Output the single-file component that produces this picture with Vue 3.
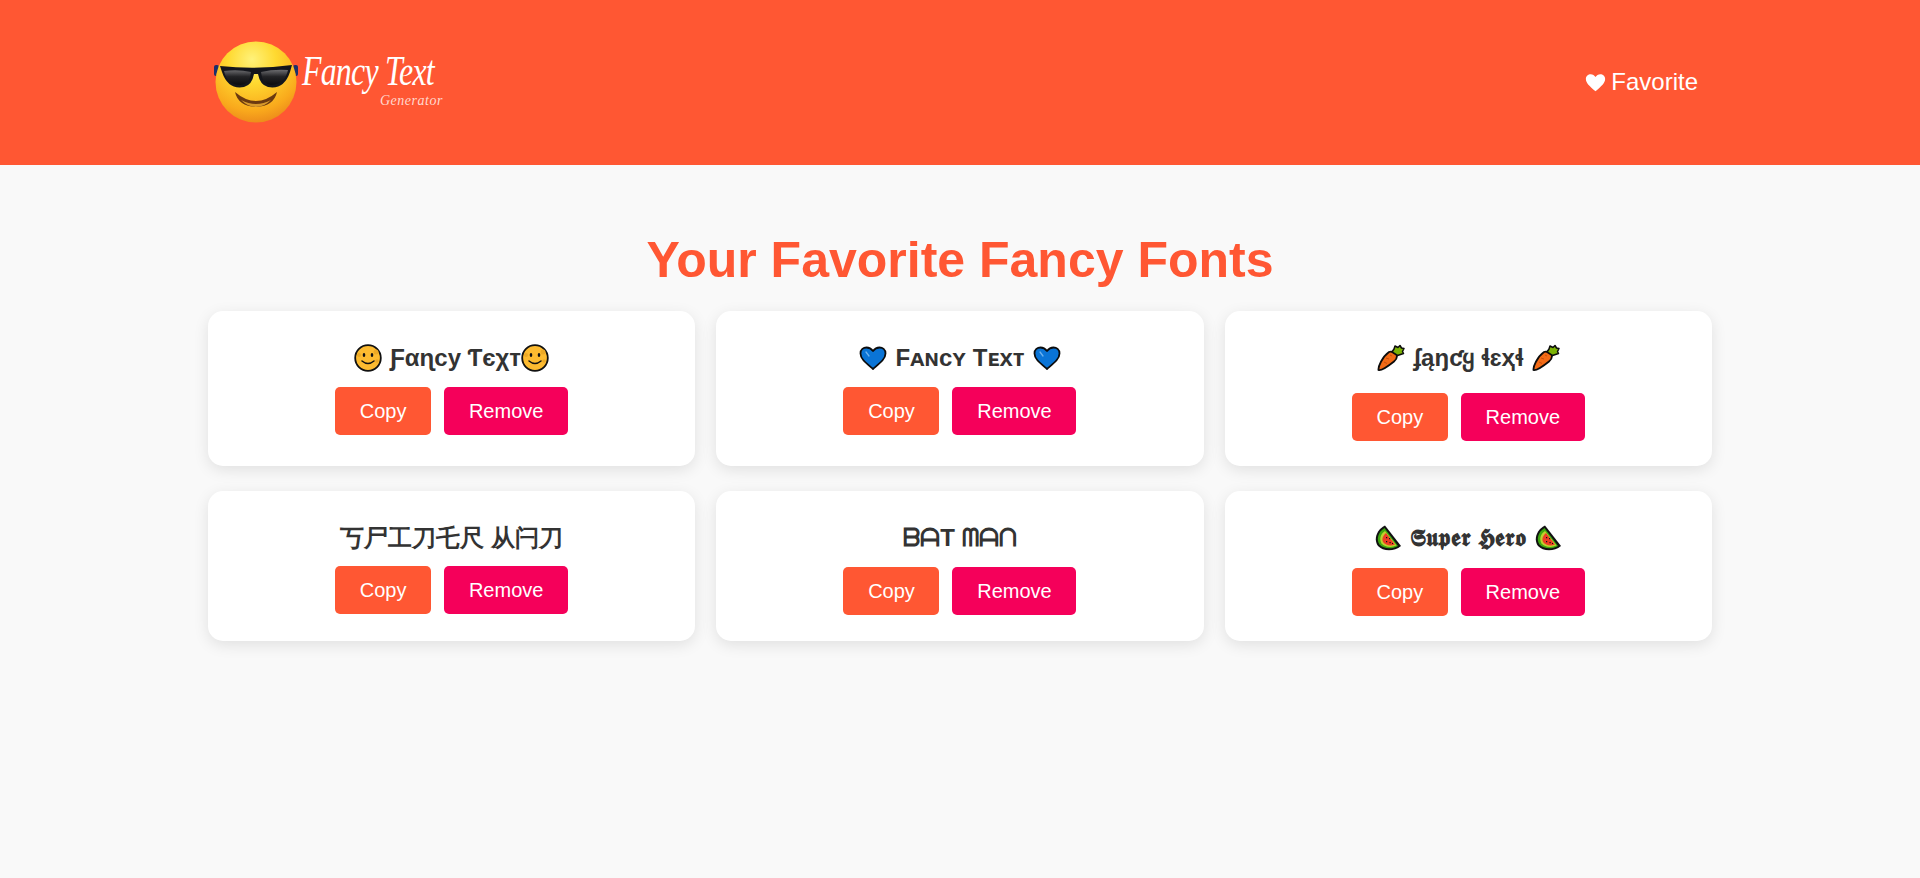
<script setup>
const cards = [
  { pre: 'smile', post: 'smile', text: 'Ƒαɳcy Ƭєχт', gapAfter: false, cls: 'c1' },
  { pre: 'heart', post: 'heart', text: 'Fᴀɴᴄʏ Tᴇxᴛ', gapAfter: true, cls: 'c2' },
  { pre: 'carrot', post: 'carrot', text: 'ʄąŋƈყ ɬɛҳɬ', gapAfter: true, cls: 'c3' },
  { pre: '', post: '', text: '丂尸工刀乇尺 从闩刀', gapAfter: false, cls: 'c4' },
  { pre: '', post: '', text: 'ᗷᗩT ᗰᗩᑎ', gapAfter: false, cls: 'c5' },
  { pre: 'melon', post: 'melon', text: '𝕾𝖚𝖕𝖊𝖗 𝕳𝖊𝖗𝖔', gapAfter: true, cls: 'c6' },
]
</script>

<template>
  <div class="page">
    <header class="top">
      <div class="logo">
        <svg class="shades" viewBox="0 0 84 84" width="84" height="84" aria-hidden="true">
          <defs>
            <radialGradient id="face" cx="45%" cy="22%" r="85%">
              <stop offset="0" stop-color="#fff27a" />
              <stop offset="0.35" stop-color="#ffd930" />
              <stop offset="0.75" stop-color="#f9a91c" />
              <stop offset="1" stop-color="#e8801a" />
            </radialGradient>
            <linearGradient id="lens" x1="0" y1="0" x2="0" y2="1">
              <stop offset="0" stop-color="#6d6d70" />
              <stop offset="0.45" stop-color="#232326" />
              <stop offset="1" stop-color="#0c0c0e" />
            </linearGradient>
          </defs>
          <rect x="0" y="25" width="5" height="11" rx="2" fill="#1c2f6b" />
          <rect x="79" y="25" width="5" height="11" rx="2" fill="#1c2f6b" />
          <circle cx="42" cy="42" r="40.5" fill="url(#face)" />
          <path d="M6 26 Q42 30 78 25 L76 32 Q70 50 54 47 Q46 45 44 34 L40 34 Q38 45 30 47 Q14 50 8 32 Z" fill="#14161c" />
          <path d="M10 31 Q24 29 37 32 Q36 44 27 45 Q13 45 10 31 Z M47 32 Q60 29 74 30 Q71 44 57 45 Q48 44 47 32 Z" fill="url(#lens)" />
          <path d="M21 52 Q42 70 63 52 Q60 66 42 67 Q24 66 21 52 Z" fill="#6b3a10" />
          <path d="M27 60 Q42 68 57 60 Q50 67 42 67 Q34 67 27 60 Z" fill="#d79a2b" />
        </svg>
        <div class="wordmark">
          <span class="wm-main">Fancy Text</span>
          <span class="wm-sub">Generator</span>
        </div>
      </div>
      <a class="fav">
        <svg viewBox="0 0 24 24" width="21" height="21" aria-hidden="true"><path d="M12 22 C5 16 1 12.500 1 8 C1 4.500 3.700 2.500 6.500 2.500 C8.800 2.500 10.800 3.700 12 5.800 C13.200 3.700 15.200 2.500 17.500 2.500 C20.300 2.500 23 4.500 23 8 C23 12.500 19 16 12 22 Z" fill="#fff"/></svg>
        <span>Favorite</span>
      </a>
    </header>

    <main class="content">
      <h1>Your Favorite Fancy Fonts</h1>
      <section class="grid">
        <article v-for="c in cards" :key="c.cls" class="card" :class="c.cls">
          <p class="fancy">
            <svg v-if="c.pre" class="emo" viewBox="0 0 28 28" aria-hidden="true"><use :href="'#e-' + c.pre" /></svg>
            <span class="txt" :class="{ pad: c.gapAfter || c.cls === 'c1' }">{{ c.text }}</span>
            <svg v-if="c.post" class="emo" :class="{ lead: c.gapAfter }" viewBox="0 0 28 28" aria-hidden="true"><use :href="'#e-' + c.post" /></svg>
          </p>
          <div class="btns">
            <button class="copy">Copy</button>
            <button class="remove">Remove</button>
          </div>
        </article>
      </section>
    </main>

    <svg width="0" height="0" class="defs" aria-hidden="true">
      <defs>
        <symbol id="e-smile" viewBox="0 0 28 28">
          <circle cx="14" cy="14" r="12.800" fill="#fdbb30" stroke="#111" stroke-width="1.800" />
          <circle cx="5" cy="11" r="2" fill="#eda925" /><circle cx="22" cy="8" r="2.500" fill="#eda925" /><circle cx="23" cy="17" r="1.800" fill="#eda925" />
          <ellipse cx="10" cy="11" rx="1.300" ry="2" fill="#111" /><ellipse cx="18" cy="11" rx="1.300" ry="2" fill="#111" />
          <path d="M8 17 Q14 22 20 17" fill="none" stroke="#111" stroke-width="1.500" stroke-linecap="round" />
        </symbol>
        <symbol id="e-heart" viewBox="0 0 28 28">
          <path d="M14 25 C7 19 1.500 15 1.500 9.500 C1.500 5.500 4.500 3.500 7.500 3.500 C10 3.500 12.500 5 14 7 C15.500 5 18 3.500 20.500 3.500 C23.500 3.500 26.500 5.500 26.500 9.500 C26.500 15 21 19 14 25 Z" fill="#0a74d6" stroke="#0c0c0c" stroke-width="1.800" stroke-linejoin="round" />
          <path d="M7 8 L10 12" stroke="#6db2ee" stroke-width="1.300" stroke-linecap="round" fill="none" />
        </symbol>
        <symbol id="e-carrot" viewBox="0 0 28 28">
          <path d="M1.500 26 C1 23 5 13 12 8 C14 7 18 8 19.500 10.500 C20.500 13 20 15 17 17.500 C12 21.500 4 27 1.500 26 Z" fill="#f36b16" stroke="#0c0c0c" stroke-width="1.800" stroke-linejoin="round" />
          <path d="M15 8 L17 5 L18 2 L21 3.500 L23 1.500 L24.500 4 L27 4.500 L25.500 7.500 L26.500 9.500 L23.500 10.500 L20.500 11.500 Z" fill="#7cb305" stroke="#0c0c0c" stroke-width="1.500" stroke-linejoin="round" />
          <path d="M9 14 L12 15 M7 18 L10 19.500 M13 11 L15 12" stroke="#c94f0c" stroke-width="1" fill="none" />
        </symbol>
        <symbol id="e-melon" viewBox="0 0 28 28">
          <path d="M11 1.500 L27 22 C20 28 9 27.500 4 22 C-0.500 16 2 6 11 1.500 Z" fill="#111" />
          <path d="M10.500 4 L24 22 C18 25.500 9.500 25 5.500 20.500 C2 15.500 4 8 10.500 4 Z" fill="#3ea80f" />
          <path d="M11 7 L22.500 21.500 C17 24 10.500 23 7.500 19.500 C5 15 6.500 10 11 7 Z" fill="#bfd12d" />
          <path d="M12 9 L21 20.500 C16.500 22.500 11.500 21.500 9 18 C7.500 15 9 11.500 12 9 Z" fill="#ee3e24" />
          <path d="M12 13h1.200v1.200H12z M15 14h1.200v1.200H15z M12 17h1.200v1.200H12z M15.500 18h1.200v1.200h-1.200z M18 19h1v1h-1z" fill="#111" />
        </symbol>
      </defs>
    </svg>
  </div>
</template>

<style>
html, body { margin: 0; background: #f9f9f9; }
</style>

<style scoped>
.page { min-height: 878px; background: #f9f9f9; font-family: "Liberation Sans", Arial, sans-serif; color: #333; }
.top { height: 165px; background: #ff5733; display: flex; align-items: center; justify-content: space-between; padding: 0 222px 0 214px; box-sizing: border-box; }
.logo { display: flex; align-items: center; color: #fff; }
.shades { display: block; margin-top: -2px; }
.wordmark { position: relative; width: 160px; height: 80px; margin-left: 0; }
.wm-main { position: absolute; left: 4px; top: 6px; font: italic 400 43px/1 "Liberation Serif", serif; white-space: nowrap; transform: scaleX(0.74); transform-origin: left center; letter-spacing: -1px; }
.wm-sub { position: absolute; left: 82px; top: 51px; font: italic 400 14px/1 "Liberation Serif", serif; color: #ffd9cf; white-space: nowrap; letter-spacing: 0.5px; }
.fav { display: flex; align-items: center; gap: 5px; color: #fff; font-size: 24px; line-height: 28px; margin-top: -1px; }
.fav svg { display: block; }
.content { padding-top: 67px; }
h1 { margin: 0; text-align: center; color: #ff5733; font-size: 50px; line-height: 57px; font-weight: 700; }
.grid { width: 1504px; margin: 22px auto 0; margin-left: 208px; display: grid; grid-template-columns: repeat(3, 1fr); column-gap: 21px; row-gap: 25px; grid-template-rows: 155px 150px; }
.card { background: #fff; border-radius: 15px; box-shadow: 0 4px 15px rgba(0, 0, 0, 0.1); padding: 30px 20px 0; text-align: center; box-sizing: border-box; }
.fancy { margin: 0; height: 34px; display: flex; justify-content: center; align-items: center; font-size: 24px; font-weight: 700; line-height: 34px; }
.txt { white-space: pre; }
.txt.pad { margin-left: 8px; }
.emo { width: 28px; height: 28px; display: block; flex: none; }
.emo.lead { margin-left: 8px; }
.btns { display: flex; justify-content: center; gap: 13px; margin-top: 12px; }
button { border: 0; border-radius: 5px; height: 48px; padding: 0 24px; color: #fff; font: 400 20px "Liberation Sans", Arial, sans-serif; box-sizing: border-box; }
.copy { background: #ff5733; width: 96px; padding: 0; }
.remove { background: #f5005a; width: 124px; padding: 0; }
.c3 .btns { margin-top: 18px; }
.c4 .btns { margin-top: 11px; }
.c5 .btns { margin-top: 12px; }
.c6 .btns { margin-top: 13px; }
.c5 .fancy { overflow: hidden; }
.defs { position: absolute; }
</style>
